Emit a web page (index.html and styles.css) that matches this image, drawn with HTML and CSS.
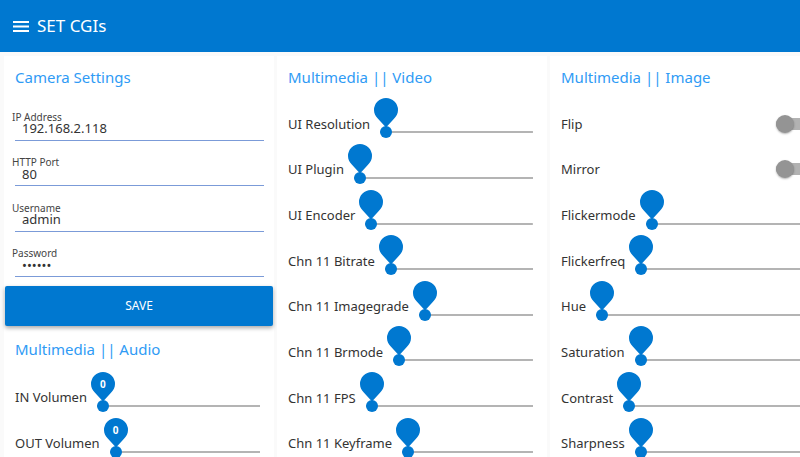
FILE: index.html
```
<!DOCTYPE html>
<html lang="en">
<head>
<meta charset="utf-8">
<title>SET CGIs</title>
<link rel="stylesheet" href="styles.css">
</head>
<body>
<svg class="sprite" aria-hidden="true">
  <symbol id="pin" viewBox="0 0 24 30"><path d="M12 0a12 12 0 0 1 12 12c0 3.600-1.500 6.200-4 8.700L12 29.500 4 20.700C1.500 18.200 0 15.600 0 12A12 12 0 0 1 12 0z"/></symbol>
</svg>
<header class="toolbar">
  <button class="menu" type="button" aria-label="Menu">
    <svg viewBox="0 0 24 24"><path d="M4 7h16v2H4zM4 11.500h16v2H4zM4 16h16v2H4z"/></svg>
  </button>
  <h1>SET CGIs</h1>
</header>
<main class="board">
  <div class="column">
    <section class="group camera">
      <h2>Camera Settings</h2>
      <div class="field"><label for="ip">IP Address</label><input id="ip" type="text" value="192.168.2.118"></div>
      <div class="field"><label for="port">HTTP Port</label><input id="port" type="text" value="80"></div>
      <div class="field"><label for="user">Username</label><input id="user" type="text" value="admin"></div>
      <div class="field"><label for="pass">Password</label><input id="pass" type="password" value="secret"></div>
      <button class="save" type="button">SAVE</button>
    </section>
    <section class="group audio">
      <h2>Multimedia || Audio</h2>
      <div class="row"><label for="in">IN Volumen</label><div class="slider"><input id="in" type="range" value="0"><svg class="pin"><use href="#pin"/></svg><output class="value" for="in">0</output></div></div>
      <div class="row"><label for="out">OUT Volumen</label><div class="slider"><input id="out" type="range" value="0"><svg class="pin"><use href="#pin"/></svg><output class="value" for="out">0</output></div></div>
    </section>
  </div>
  <section class="group full">
    <h2>Multimedia || Video</h2>
    <div class="row"><label for="res">UI Resolution</label><div class="slider"><input id="res" type="range" value="0"><svg class="pin"><use href="#pin"/></svg></div></div>
    <div class="row"><label for="plugin">UI Plugin</label><div class="slider"><input id="plugin" type="range" value="0"><svg class="pin"><use href="#pin"/></svg></div></div>
    <div class="row"><label for="enc">UI Encoder</label><div class="slider"><input id="enc" type="range" value="0"><svg class="pin"><use href="#pin"/></svg></div></div>
    <div class="row"><label for="bitrate">Chn 11 Bitrate</label><div class="slider"><input id="bitrate" type="range" value="0"><svg class="pin"><use href="#pin"/></svg></div></div>
    <div class="row"><label for="grade">Chn 11 Imagegrade</label><div class="slider"><input id="grade" type="range" value="0"><svg class="pin"><use href="#pin"/></svg></div></div>
    <div class="row"><label for="brmode">Chn 11 Brmode</label><div class="slider"><input id="brmode" type="range" value="0"><svg class="pin"><use href="#pin"/></svg></div></div>
    <div class="row"><label for="fps">Chn 11 FPS</label><div class="slider"><input id="fps" type="range" value="0"><svg class="pin"><use href="#pin"/></svg></div></div>
    <div class="row"><label for="key">Chn 11 Keyframe</label><div class="slider"><input id="key" type="range" value="0"><svg class="pin"><use href="#pin"/></svg></div></div>
  </section>
  <section class="group full">
    <h2>Multimedia || Image</h2>
    <div class="row toggle"><label for="flip">Flip</label><input id="flip" class="switch" type="checkbox"></div>
    <div class="row toggle"><label for="mirror">Mirror</label><input id="mirror" class="switch" type="checkbox"></div>
    <div class="row"><label for="fmode">Flickermode</label><div class="slider"><input id="fmode" type="range" value="0"><svg class="pin"><use href="#pin"/></svg></div></div>
    <div class="row"><label for="ffreq">Flickerfreq</label><div class="slider"><input id="ffreq" type="range" value="0"><svg class="pin"><use href="#pin"/></svg></div></div>
    <div class="row"><label for="hue">Hue</label><div class="slider"><input id="hue" type="range" value="0"><svg class="pin"><use href="#pin"/></svg></div></div>
    <div class="row"><label for="sat">Saturation</label><div class="slider"><input id="sat" type="range" value="0"><svg class="pin"><use href="#pin"/></svg></div></div>
    <div class="row"><label for="con">Contrast</label><div class="slider"><input id="con" type="range" value="0"><svg class="pin"><use href="#pin"/></svg></div></div>
    <div class="row"><label for="sharp">Sharpness</label><div class="slider"><input id="sharp" type="range" value="0"><svg class="pin"><use href="#pin"/></svg></div></div>
  </section>
</main>
</body>
</html>
```
FILE: styles.css
```
* { box-sizing: border-box; }
body {
  margin: 0;
  background: #fafafa;
  color: #333;
  font: 13px/20px "Noto Sans", sans-serif;
  overflow: hidden;
}
button, input { font: inherit; color: inherit; }
.sprite { position: absolute; width: 0; height: 0; }

.toolbar {
  display: flex;
  align-items: center;
  gap: 4px;
  height: 52px;
  padding: 0 9px;
  background: #0078d0;
  color: #fff;
}
.menu { display: flex; padding: 0; border: 0; background: none; }
.menu svg { width: 24px; height: 24px; fill: #fff; }
.toolbar h1 { margin: 0; font-size: 17px; font-weight: 400; }

.board {
  display: grid;
  grid-template-columns: repeat(3, minmax(270px, 1fr));
  gap: 3px;
  align-items: start;
  padding: 4px;
}
.group {
  display: grid;
  background: #fff;
}
.camera { height: 271px; grid-template-rows: 43px repeat(5, 1fr); }
.audio { height: 137px; grid-template-rows: repeat(3, 1fr); }
.full { height: 408px; grid-template-rows: 43px repeat(8, 1fr); }

h2 {
  align-self: center;
  margin: 0;
  padding: 0 11px 2px;
  color: #2f9bf5;
  font-size: 15px;
  font-weight: 400;
}

.field {
  display: flex;
  flex-direction: column;
  justify-content: flex-end;
  padding: 0 10px 4px 8px;
}
.field label { font-size: 10px; line-height: 12px; color: #444; }
.field input {
  height: 18px;
  margin-left: 3px;
  padding: 0 7px 6px;
  border: 0;
  border-bottom: 1px solid #7b9bd8;
  background: none;
  outline: 0;
}

.save {
  margin: 5px 1px 1px;
  border: 0;
  border-radius: 2px;
  background: #0078d0;
  color: #fff;
  font-size: 12px;
  box-shadow: 0 2px 4px rgba(0, 0, 0, .35);
}

.row {
  display: flex;
  align-items: center;
  gap: 10px;
  padding: 4px 14px 0 11px;
}
.slider { position: relative; flex: 1; }
.slider input {
  display: block;
  width: 100%;
  height: 12px;
  margin: 17px 0 0;
  appearance: none;
  background: linear-gradient(#b4b4b4, #b4b4b4) center / 100% 2px no-repeat;
}
.slider input::-webkit-slider-thumb {
  appearance: none;
  width: 12px;
  height: 12px;
  border-radius: 50%;
  background: #0078d0;
}
.pin {
  position: absolute;
  left: -6px;
  bottom: 10px;
  width: 24px;
  height: 30px;
  fill: #0078d0;
  pointer-events: none;
}
.value {
  position: absolute;
  left: -6px;
  bottom: 18px;
  width: 24px;
  color: #fff;
  font-size: 10px;
  font-weight: 700;
  text-align: center;
}

.toggle { justify-content: space-between; padding-right: 8px; }
.switch {
  appearance: none;
  position: relative;
  width: 36px;
  height: 12px;
  margin: 0;
  border-radius: 6px;
  background: #b2b2b2;
}
.switch::before {
  content: "";
  position: absolute;
  left: 0;
  top: -3px;
  width: 18px;
  height: 18px;
  border-radius: 50%;
  background: #949494;
  box-shadow: 0 1px 2px rgba(0, 0, 0, .3);
}
```
